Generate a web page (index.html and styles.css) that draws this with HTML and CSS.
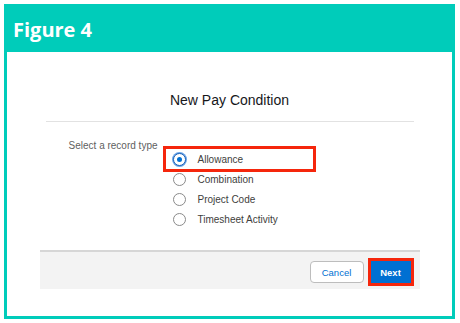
FILE: index.html
```html
<!DOCTYPE html>
<html lang="en">
<head>
    <meta charset="UTF-8">
    <title>Figure 4 - New Pay Condition</title>
    <link rel="stylesheet" href="styles.css">
</head>
<body>

<div class="figure">
    <div class="figure-title">Figure 4</div>

    <div class="modal">
        <div class="modal-header">
            <h2>New Pay Condition</h2>
        </div>

        <div class="modal-body">
            <div class="field-label">Select a record type</div>
            <div class="options">
                <label class="option highlight">
                    <span class="radio checked"></span>
                    <span>Allowance</span>
                </label>
                <label class="option">
                    <span class="radio"></span>
                    <span>Combination</span>
                </label>
                <label class="option">
                    <span class="radio"></span>
                    <span>Project Code</span>
                </label>
                <label class="option">
                    <span class="radio"></span>
                    <span>Timesheet Activity</span>
                </label>
            </div>
        </div>

        <div class="modal-footer">
            <button class="btn btn-neutral">Cancel</button>
            <button class="btn btn-brand highlight">Next</button>
        </div>
    </div>
</div>

</body>
</html>
```

FILE: styles.css
```css
body {
    margin: 0;
    padding: 0;
    background: #fff;
    font-family: "Liberation Sans", Arial, sans-serif;
}
.figure {
    box-sizing: border-box;
    width: 451px;
    height: 315px;
    margin: 4px;
    border: 3px solid #00ccba;
    border-top: none;
}
.figure-title {
    box-sizing: border-box;
    height: 48px;
    margin: 0 -3px;
    padding: 12px 9px 9px;
    background: #00ccba;
    color: #fff;
    font-family: "Open Sans", sans-serif;
    font-weight: 700;
    font-size: 20px;
    line-height: 27px;
}
.modal {
    width: 380px;
    margin: 0 auto;
}
.modal-header {
    margin: 0 6px;
    padding: 38px 0 11px;
    border-bottom: 1px solid #e2e2e2;
    text-align: center;
}
.modal-header h2 {
    margin: 0;
    font-weight: 400;
    font-size: 14px;
    line-height: 20px;
    color: #16171a;
}
.modal-body {
    display: flex;
    align-items: flex-start;
    padding-top: 17px;
    font-size: 10px;
    line-height: 13px;
}
.field-label {
    width: 118px;
    text-align: right;
    color: #5f5f5f;
}
.options {
    margin: 10px 0 0 8px;
    width: 147px;
}
.option {
    display: flex;
    align-items: center;
    gap: 12px;
    height: 20px;
    padding-left: 7px;
    color: #3e3e3c;
}
.radio {
    box-sizing: border-box;
    width: 13px;
    height: 13px;
    border: 1px solid #8a8a8a;
    border-radius: 50%;
    background: #fff;
    display: flex;
    align-items: center;
    justify-content: center;
}
.radio.checked {
    border: 1.5px solid #1a5fb4;
    box-shadow: 0 0 0 1px #6aa5e8;
}
.radio.checked::after {
    content: "";
    width: 5px;
    height: 5px;
    border-radius: 50%;
    background: #0070d2;
}
.highlight {
    outline: 3px solid #f5260c;
    outline-offset: 0;
}
.modal-footer {
    display: flex;
    justify-content: flex-end;
    gap: 7px;
    margin-top: 21px;
    padding: 9px 9px 6px;
    background: #f3f3f3;
    border-top: 2px solid #d6d6d6;
}
.btn {
    height: 22px;
    border-radius: 4px;
    font-family: "Liberation Sans", Arial, sans-serif;
    font-size: 9.5px;
    cursor: pointer;
}
.btn-neutral {
    width: 54px;
    background: #fff;
    border: 1px solid #bdbdbd;
    color: #0070d2;
}
.btn-brand {
    width: 40px;
    background: #0070d2;
    border: 1px solid #0070d2;
    border-radius: 0;
    color: #fff;
    font-weight: 700;
}
```
